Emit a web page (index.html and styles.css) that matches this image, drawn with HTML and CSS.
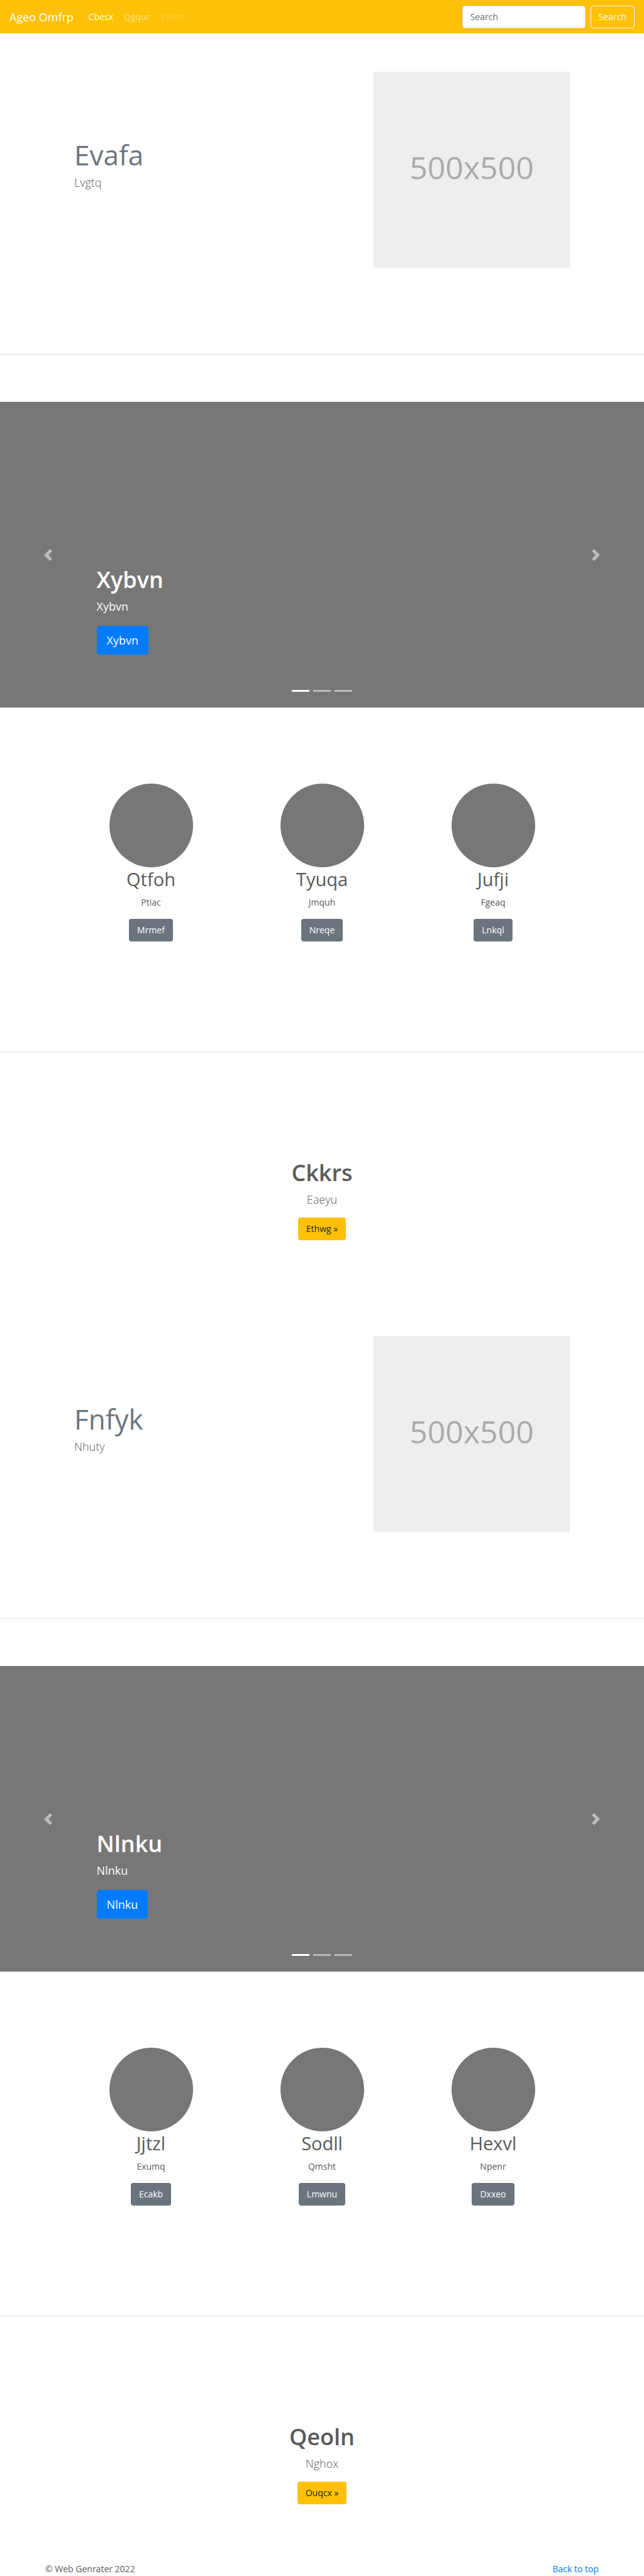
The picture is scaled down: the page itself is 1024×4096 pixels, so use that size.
FILE: index.html
```html
<!DOCTYPE html>
<html lang="en">
<head>
<meta charset="utf-8">
<meta name="viewport" content="width=device-width, initial-scale=1">
<title>Ageo Omfrp</title>
<link rel="stylesheet" href="styles.css">
</head>
<body id="top">
<svg class="sprite" aria-hidden="true">
  <symbol id="chevron-left" viewBox="0 0 8 8"><path d="M5.25 0l-4 4 4 4 1.5-1.5L4.25 4l2.5-2.5L5.25 0z"/></symbol>
  <symbol id="chevron-right" viewBox="0 0 8 8"><path d="M2.75 0l-1.5 1.5L3.75 4l-2.5 2.5L2.75 8l4-4-4-4z"/></symbol>
</svg>
<header class="navbar">
  <a class="brand" href="#top">Ageo Omfrp</a>
  <nav class="nav">
    <a class="nav-link active" href="#">Cbesx</a>
    <a class="nav-link" href="#">Qgqur</a>
    <a class="nav-link disabled" href="#">Ydnrz</a>
  </nav>
  <form class="search">
    <input class="search-input" type="search" placeholder="Search" aria-label="Search">
    <button class="btn btn-outline" type="button">Search</button>
  </form>
</header>

<main>
  <section class="featurette">
    <div class="featurette-text">
      <h2 class="featurette-title">Evafa</h2>
      <p class="lead">Lvgtq</p>
    </div>
    <div class="placeholder">500x500</div>
  </section>
  <hr class="divider">
  <section class="carousel">
    <div class="caption">
      <h2 class="title">Xybvn</h2>
      <p class="caption-text">Xybvn</p>
      <a class="btn btn-primary" href="#">Xybvn</a>
    </div>
    <button class="control prev" type="button" aria-label="Previous"><svg class="chevron"><use href="#chevron-left"/></svg></button>
    <button class="control next" type="button" aria-label="Next"><svg class="chevron"><use href="#chevron-right"/></svg></button>
    <div class="indicators"><span class="indicator current"></span><span class="indicator"></span><span class="indicator"></span></div>
  </section>
  <section class="columns">
    <div class="column">
      <div class="avatar"></div>
      <h2 class="column-title">Qtfoh</h2>
      <p class="column-text">Ptiac</p>
      <a class="btn btn-secondary" href="#">Mrmef</a>
    </div>
    <div class="column">
      <div class="avatar"></div>
      <h2 class="column-title">Tyuqa</h2>
      <p class="column-text">Jmquh</p>
      <a class="btn btn-secondary" href="#">Nreqe</a>
    </div>
    <div class="column">
      <div class="avatar"></div>
      <h2 class="column-title">Jufji</h2>
      <p class="column-text">Fgeaq</p>
      <a class="btn btn-secondary" href="#">Lnkql</a>
    </div>
  </section>
  <hr class="divider">
  <section class="cta">
    <h2 class="title">Ckkrs</h2>
    <p class="lead">Eaeyu</p>
    <a class="btn btn-warning" href="#">Ethwg »</a>
  </section>

  <section class="featurette">
    <div class="featurette-text">
      <h2 class="featurette-title">Fnfyk</h2>
      <p class="lead">Nhuty</p>
    </div>
    <div class="placeholder">500x500</div>
  </section>
  <hr class="divider">
  <section class="carousel">
    <div class="caption">
      <h2 class="title">Nlnku</h2>
      <p class="caption-text">Nlnku</p>
      <a class="btn btn-primary" href="#">Nlnku</a>
    </div>
    <button class="control prev" type="button" aria-label="Previous"><svg class="chevron"><use href="#chevron-left"/></svg></button>
    <button class="control next" type="button" aria-label="Next"><svg class="chevron"><use href="#chevron-right"/></svg></button>
    <div class="indicators"><span class="indicator current"></span><span class="indicator"></span><span class="indicator"></span></div>
  </section>
  <section class="columns">
    <div class="column">
      <div class="avatar"></div>
      <h2 class="column-title">Jjtzl</h2>
      <p class="column-text">Exumq</p>
      <a class="btn btn-secondary" href="#">Ecakb</a>
    </div>
    <div class="column">
      <div class="avatar"></div>
      <h2 class="column-title">Sodll</h2>
      <p class="column-text">Qmsht</p>
      <a class="btn btn-secondary" href="#">Lmwnu</a>
    </div>
    <div class="column">
      <div class="avatar"></div>
      <h2 class="column-title">Hexvl</h2>
      <p class="column-text">Npenr</p>
      <a class="btn btn-secondary" href="#">Dxxeo</a>
    </div>
  </section>
  <hr class="divider">
  <section class="cta">
    <h2 class="title">Qeoln</h2>
    <p class="lead">Nghox</p>
    <a class="btn btn-warning" href="#">Ouqcx »</a>
  </section>
</main>

<footer class="footer">
  <span>© Web Genrater 2022</span>
  <a class="footer-link" href="#top">Back to top</a>
</footer>
</body>
</html>
```
FILE: styles.css
```css
* { box-sizing: border-box; }

body {
  margin: 0;
  background: #fff;
  color: #5a5a5a;
  font-family: "Open Sans", "Noto Sans", sans-serif;
  font-size: 14px;
  line-height: 23px;
}

h2, p { margin: 0; }
a { text-decoration: none; }
.sprite { display: none; }

.navbar {
  display: flex;
  align-items: center;
  height: 53px;
  padding: 0 15px;
  background: #ffc107;
}
.brand {
  margin-right: 24px;
  color: #fff;
  font-size: 18px;
  line-height: 28px;
}
.nav { display: flex; gap: 17px; }
.nav-link { color: rgba(255, 255, 255, .5); }
.nav-link.active { color: #fff; }
.nav-link.disabled { color: rgba(255, 255, 255, .25); }
.search { display: flex; gap: 8px; margin-left: auto; }
.search-input {
  width: 196px;
  height: 36px;
  padding: 0 12px;
  border: 1px solid #ced4da;
  border-radius: 4px;
  background: #fff;
  font: inherit;
}
.search-input::placeholder { color: #6c757d; opacity: 1; }

.btn {
  display: inline-block;
  height: 36px;
  padding: 0 12px;
  border: 1px solid transparent;
  border-radius: 4px;
  font: inherit;
  line-height: 34px;
}
.btn-outline { border-color: #f8f9fa; background: transparent; color: #f8f9fa; }
.btn-secondary { background: #6c757d; color: #fff; }
.btn-warning { background: #ffc107; color: #212529; }
.btn-primary {
  height: 46px;
  padding: 0 15px;
  border-radius: 5px;
  background: #007bff;
  color: #fff;
  font-size: 18px;
  line-height: 44px;
}

.featurette {
  display: flex;
  justify-content: space-between;
  padding: 61px 118px 137px;
}
.featurette-text { padding-top: 105px; }
.featurette-title {
  margin-bottom: 2px;
  color: #6c757d;
  font-size: 44px;
  font-weight: 400;
  line-height: 55px;
}
.lead { font-size: 18px; font-weight: 300; line-height: 28px; }
.placeholder {
  display: flex;
  align-items: center;
  justify-content: center;
  width: 312px;
  aspect-ratio: 1;
  padding-bottom: 8px;
  background: #eee;
  color: #aaa;
  font-size: 50px;
  line-height: 60px;
}

.divider { height: 1px; margin: 0; border: 0; background: #e5e5e5; }

.carousel {
  position: relative;
  display: flex;
  align-items: flex-end;
  min-height: 486px;
  margin-top: 75px;
  padding: 0 15% 84px;
  background: #777;
  color: #fff;
}
.title { margin-bottom: 6px; font-size: 36px; font-weight: 600; line-height: 44px; }
.caption-text { margin-bottom: 17px; font-size: 18px; line-height: 28px; }
.caption .btn { display: block; width: fit-content; }
.control {
  position: absolute;
  top: 0;
  bottom: 0;
  display: flex;
  align-items: center;
  justify-content: center;
  width: 15%;
  padding: 0;
  border: 0;
  background: none;
  color: #fff;
  opacity: .5;
}
.prev { left: 0; }
.next { right: 0; }
.chevron { width: 19px; height: 19px; fill: currentColor; }
.indicators {
  position: absolute;
  right: 15%;
  bottom: 25px;
  left: 15%;
  display: flex;
  justify-content: center;
  gap: 6px;
}
.indicator { width: 28px; height: 3px; background: #fff; opacity: .5; }
.indicator.current { opacity: 1; }

.columns {
  display: grid;
  grid-template-columns: repeat(3, 1fr);
  padding: 121px 104px 175px;
}
.column, .cta { display: flex; flex-direction: column; align-items: center; }
.avatar { width: 133px; height: 133px; border-radius: 50%; background: #777; }
.column-title { margin: 1px 0 8px; font-size: 29px; font-weight: 400; line-height: 36px; }
.column-text { margin-bottom: 15px; line-height: 22px; }

.cta { padding: 170px 15px 91px; }
.cta .lead { margin-bottom: 15px; }

.footer { display: flex; justify-content: space-between; padding: 0 72px; }
.footer-link { color: #007bff; }
```
